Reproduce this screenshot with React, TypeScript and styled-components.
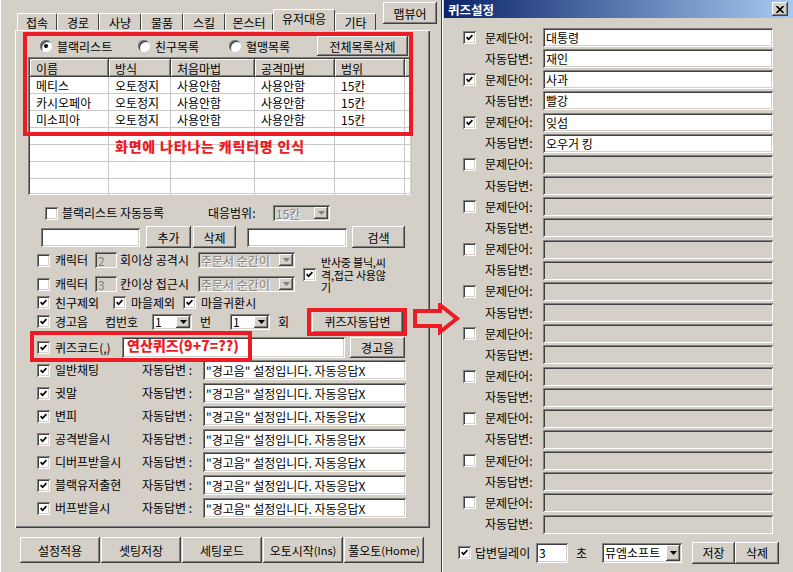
import React from "react";
import styled, { createGlobalStyle, css } from "styled-components";

const FACE = "#d4d0c8";
const RED = "#ed1c24";

const GlobalStyle = createGlobalStyle`
  html, body { margin: 0; padding: 0; background: ${FACE}; }
  body { font-family: "Noto Sans CJK KR", "Noto Sans", sans-serif; font-size: 12px; color: #000; }
  * { box-sizing: border-box; }
`;

const sunken = css`
  box-shadow: inset 1px 1px #808080, inset -1px -1px #ffffff, inset 2px 2px #404040, inset -2px -2px ${FACE};
`;
const raised = css`
  box-shadow: inset -1px -1px #404040, inset 1px 1px #ffffff, inset -2px -2px #808080, inset 2px 2px ${FACE};
`;

const Screen = styled.div`
  position: relative;
  display: flex;
  width: 793px;
  height: 572px;
  overflow: hidden;
  background: ${FACE};
`;

/* ---------- left window ---------- */
const LeftWindow = styled.div`
  width: 442px;
  height: 572px;
  flex: none;
  display: flex;
  flex-direction: column;
  padding-top: 2px;
  border-right: 1px solid #404040;
  box-shadow: inset 1px 0 #ffffff;
`;

const TopStrip = styled.div`
  display: flex;
  align-items: flex-end;
  height: 28px;
  padding-left: 17px;
`;

const Tab = styled.div<{ $w: number; $active?: boolean }>`
  width: ${(p) => p.$w}px;
  height: ${(p) => (p.$active ? 22 : 17)}px;
  margin-bottom: ${(p) => (p.$active ? -1 : 0)}px;
  position: relative;
  z-index: ${(p) => (p.$active ? 2 : 1)};
  display: flex;
  align-items: ${(p) => (p.$active ? "flex-start" : "center")};
  padding-top: ${(p) => (p.$active ? 2 : 1)}px;
  justify-content: center;
  background: ${FACE};
  border-top: 1px solid #ffffff;
  border-left: 1px solid #ffffff;
  border-right: 1px solid #404040;
  border-radius: 2px 2px 0 0;
  font-size: 12px;
  line-height: 14px;
  white-space: nowrap;
`;

const Btn = styled.button<{ $w: number; $h?: number; $ml?: number; $fs?: number }>`
  width: ${(p) => p.$w}px;
  height: ${(p) => p.$h ?? 22}px;
  margin-left: ${(p) => p.$ml ?? 0}px;
  flex: none;
  border: none;
  padding: 0;
  background: ${FACE};
  ${raised};
  font-family: inherit;
  font-size: ${(p) => p.$fs ?? 12}px;
  color: #000;
  white-space: nowrap;
  display: inline-flex;
  align-items: center;
  justify-content: center;
`;

const MapButton = styled(Btn)`
  align-self: flex-start;
`;

const TabPanel = styled.div`
  margin-left: 15px;
  width: 415px;
  height: 498px;
  flex: none;
  display: flex;
  flex-direction: column;
  box-shadow: inset 1px 1px #ffffff, inset -1px -1px #404040, inset -2px -2px #808080;
`;

const Row = styled.div<{ $mt?: number; $h: number; $pl?: number; $pr?: number }>`
  display: flex;
  align-items: center;
  flex: none;
  height: ${(p) => p.$h}px;
  margin-top: ${(p) => p.$mt ?? 0}px;
  padding-left: ${(p) => p.$pl ?? 0}px;
  padding-right: ${(p) => p.$pr ?? 0}px;
`;

const Label = styled.span<{ $w?: number; $ml?: number; $fs?: number }>`
  flex: none;
  ${(p) => (p.$w !== undefined ? `width: ${p.$w}px;` : "")}
  margin-left: ${(p) => p.$ml ?? 0}px;
  font-size: ${(p) => p.$fs ?? 12}px;
  white-space: nowrap;
  line-height: 16px;
`;

const RadioItem = styled.div<{ $w?: number }>`
  display: flex;
  align-items: center;
  flex: none;
  ${(p) => (p.$w !== undefined ? `width: ${p.$w}px;` : "")}
`;

const RadioCircle = styled.span<{ $on?: boolean }>`
  width: 12px;
  height: 12px;
  flex: none;
  border-radius: 50%;
  background: #ffffff;
  box-shadow: inset 1px 1px #808080, inset -1px -1px #ffffff, inset 2px 2px #404040;
  display: flex;
  align-items: center;
  justify-content: center;
  margin-right: 5px;
  &::after {
    content: "";
    width: 4px;
    height: 4px;
    border-radius: 50%;
    background: ${(p) => (p.$on ? "#000" : "transparent")};
  }
`;

const CheckBoxBox = styled.span<{ $ml?: number; $mt?: number }>`
  display: inline-flex;
  flex: none;
  width: 13px;
  height: 13px;
  background: #ffffff;
  ${sunken};
  align-items: center;
  justify-content: center;
  margin-left: ${(p) => p.$ml ?? 0}px;
  margin-top: ${(p) => p.$mt ?? 0}px;
`;

const Check: React.FC<{ on?: boolean; ml?: number; mt?: number }> = ({ on, ml, mt }) => (
  <CheckBoxBox $ml={ml} $mt={mt}>
    {on && (
      <svg width="7" height="7" viewBox="0 0 7 7">
        <path d="M0.6 3.2 L2.6 5.3 L6.4 1.2" stroke="#000" strokeWidth="1.7" fill="none" />
      </svg>
    )}
  </CheckBoxBox>
);

const TextBox = styled.div<{ $w: number; $h?: number; $ml?: number; $off?: boolean }>`
  width: ${(p) => p.$w}px;
  height: ${(p) => p.$h ?? 20}px;
  margin-left: ${(p) => p.$ml ?? 0}px;
  flex: none;
  background: ${(p) => (p.$off ? FACE : "#ffffff")};
  color: ${(p) => (p.$off ? "#808080" : "#000")};
  ${sunken};
  display: flex;
  align-items: center;
  padding-left: 3px;
  font-size: 12px;
  white-space: nowrap;
`;

const ComboBox = styled.div<{ $w: number; $h?: number; $ml?: number; $off?: boolean }>`
  width: ${(p) => p.$w}px;
  height: ${(p) => p.$h ?? 16}px;
  margin-left: ${(p) => p.$ml ?? 0}px;
  flex: none;
  background: ${(p) => (p.$off ? FACE : "#ffffff")};
  color: ${(p) => (p.$off ? "#808080" : "#000")};
  text-shadow: ${(p) => (p.$off ? "1px 1px #ffffff" : "none")};
  ${sunken};
  display: flex;
  align-items: center;
  padding: 2px 2px 2px 3px;
  font-size: 12px;
  white-space: nowrap;
`;

const ComboText = styled.span`
  flex: 1;
`;

const ComboArrow = styled.span`
  width: 14px;
  align-self: stretch;
  flex: none;
  background: ${FACE};
  ${raised};
  display: flex;
  align-items: center;
  justify-content: center;
`;

const Combo: React.FC<{ w: number; h?: number; ml?: number; off?: boolean; text: string }> = ({
  w,
  h,
  ml,
  off,
  text,
}) => (
  <ComboBox $w={w} $h={h} $ml={ml} $off={off}>
    <ComboText>{text}</ComboText>
    <ComboArrow>
      <svg width="7" height="4" viewBox="0 0 7 4">
        <path d="M0 0 H7 L3.5 4 Z" fill={off ? "#808080" : "#000"} />
      </svg>
    </ComboArrow>
  </ComboBox>
);

/* list view */
const ListView = styled.div`
  margin-top: 1px;
  margin-left: 13px;
  width: 384px;
  height: 138px;
  flex: none;
  background: #ffffff;
  ${sunken};
  padding: 2px;
  overflow: hidden;
`;

const ListHeader = styled.div`
  display: flex;
  height: 18px;
`;

const HeadCell = styled.div<{ $w: number }>`
  width: ${(p) => p.$w}px;
  flex: none;
  height: 18px;
  background: ${FACE};
  ${raised};
  padding-left: 6px;
  display: flex;
  align-items: center;
  white-space: nowrap;
`;

const ListRow = styled.div`
  display: flex;
  height: 17px;
`;

const Cell = styled.div<{ $w: number }>`
  width: ${(p) => p.$w}px;
  flex: none;
  height: 17px;
  border-right: 1px solid #c8c8c8;
  border-bottom: 1px solid #c8c8c8;
  padding-left: 6px;
  display: flex;
  align-items: center;
  white-space: nowrap;
`;

const COLS = [79, 62, 84, 80, 70, 5];

const CharBlock = styled.div`
  display: flex;
  margin-top: 4px;
  height: 40px;
  flex: none;
`;

const CharColumn = styled.div`
  display: flex;
  flex-direction: column;
  gap: 8px;
`;

const SideOption = styled.div`
  display: flex;
  align-items: flex-start;
  margin-left: 8px;
  padding-top: 4px;
`;

const SideText = styled.span`
  margin-left: 5px;
  font-size: 11px;
  line-height: 12.5px;
  letter-spacing: -0.2px;
  white-space: nowrap;
`;

const AutoList = styled.div`
  display: flex;
  flex-direction: column;
  gap: 3px;
  margin-top: 2px;
`;

const BottomBar = styled.div`
  display: flex;
  gap: 1px;
  margin-top: 9px;
  padding-left: 20px;
`;

const Small = styled.span`
  font-size: 11px;
`;

/* ---------- right window ---------- */
const RightWindow = styled.div`
  flex: 1;
  height: 572px;
  display: flex;
  flex-direction: column;
  padding-left: 2px;
  box-shadow: inset 1px 0 #ffffff;
`;

const TitleBar = styled.div`
  height: 18px;
  flex: none;
  background: linear-gradient(to right, #0a246a, #a6caf0);
  display: flex;
  align-items: center;
  padding-left: 4px;
  padding-right: 5px;
  color: #ffffff;
  font-weight: bold;
  font-size: 12.5px;
`;

const CloseBtn = styled.span`
  margin-left: auto;
  width: 16px;
  height: 14px;
  background: ${FACE};
  ${raised};
  display: flex;
  align-items: center;
  justify-content: center;
`;

const QuizList = styled.div`
  display: flex;
  flex-direction: column;
  gap: 2.17px;
  margin-top: 10px;
`;

/* ---------- annotations (overlay) ---------- */
const RedBox = styled.div<{ $l: number; $t: number; $w: number; $h: number }>`
  position: absolute;
  left: ${(p) => p.$l}px;
  top: ${(p) => p.$t}px;
  width: ${(p) => p.$w}px;
  height: ${(p) => p.$h}px;
  border: 4px solid ${RED};
  pointer-events: none;
`;

const RedNote = styled.div<{ $l: number; $t: number; $fs: number; $ls?: number }>`
  position: absolute;
  left: ${(p) => p.$l}px;
  top: ${(p) => p.$t}px;
  color: ${RED};
  font-weight: 900;
  font-size: ${(p) => p.$fs}px;
  letter-spacing: ${(p) => p.$ls ?? 0}px;
  line-height: 1.1;
  white-space: nowrap;
`;

const ArrowMark = styled.svg`
  position: absolute;
  left: 413px;
  top: 303px;
`;

const TABS: [string, number][] = [
  ["접속", 40],
  ["경로", 42],
  ["사냥", 42],
  ["물품", 42],
  ["스킬", 42],
  ["몬스터", 48],
  ["유저대응", 62],
  ["기타", 41],
];

const LIST = [
  ["메티스", "오토정지", "사용안함", "사용안함", "15칸", ""],
  ["카시오페아", "오토정지", "사용안함", "사용안함", "15칸", ""],
  ["미소피아", "오토정지", "사용안함", "사용안함", "15칸", ""],
  ["", "", "", "", "", ""],
  ["", "", "", "", "", ""],
  ["", "", "", "", "", ""],
  ["", "", "", "", "", ""],
];

const AUTO = ["일반채팅", "귓말", "변피", "공격받을시", "디버프받을시", "블랙유저출현", "버프받을시"];

const QUIZ: [string, string, boolean][] = [
  ["대통령", "재인", true],
  ["사과", "빨강", true],
  ["잊섬", "오우거 킹", true],
  ...Array.from({ length: 9 }, () => ["", "", false] as [string, string, boolean]),
];

export default function App() {
  return (
    <Screen>
      <GlobalStyle />
      <LeftWindow>
        <TopStrip>
          {TABS.map(([t, w]) => (
            <Tab key={t} $w={w} $active={t === "유저대응"}>
              {t}
            </Tab>
          ))}
          <MapButton $w={54} $h={22} $ml={7}>
            맵뷰어
          </MapButton>
        </TopStrip>

        <TabPanel>
          <Row $mt={6} $h={20} $pl={25} $pr={22}>
            <RadioItem $w={98}>
              <RadioCircle $on />
              블랙리스트
            </RadioItem>
            <RadioItem $w={91}>
              <RadioCircle />
              친구목록
            </RadioItem>
            <RadioItem>
              <RadioCircle />
              혈맹목록
            </RadioItem>
            <Btn $w={91} $h={20} style={{ marginLeft: "auto" }}>
              전체목록삭제
            </Btn>
          </Row>

          <ListView>
            <ListHeader>
              {["이름", "방식", "처음마법", "공격마법", "범위", ""].map((h, i) => (
                <HeadCell key={i} $w={COLS[i]}>
                  {h}
                </HeadCell>
              ))}
            </ListHeader>
            {LIST.map((r, ri) => (
              <ListRow key={ri}>
                {r.map((c, ci) => (
                  <Cell key={ci} $w={COLS[ci]}>
                    {c}
                  </Cell>
                ))}
              </ListRow>
            ))}
          </ListView>

          <Row $mt={10} $h={16} $pl={30}>
            <Check />
            <Label $w={146} $ml={4}>
              블랙리스트 자동등록
            </Label>
            <Label $w={65}>대응범위:</Label>
            <Combo w={57} off text="15칸" />
          </Row>

          <Row $mt={5} $h={22} $pl={26}>
            <TextBox $w={99} $h={19} />
            <Btn $w={45} $ml={6}>
              추가
            </Btn>
            <Btn $w={43} $ml={2}>
              삭제
            </Btn>
            <TextBox $w={100} $h={19} $ml={11} />
            <Btn $w={53} $ml={5}>
              검색
            </Btn>
          </Row>

          <CharBlock>
            <CharColumn>
              <Row $h={16} $pl={22}>
                <Check />
                <Label $w={40} $ml={5}>
                  캐릭터
                </Label>
                <TextBox $w={22} $h={16} $off>
                  2
                </TextBox>
                <Label $w={78} $ml={3}>
                  회이상 공격시
                </Label>
                <Combo w={97} off text="주문서 순간이" />
              </Row>
              <Row $h={16} $pl={22}>
                <Check />
                <Label $w={40} $ml={5}>
                  캐릭터
                </Label>
                <TextBox $w={22} $h={16} $off>
                  3
                </TextBox>
                <Label $w={78} $ml={3}>
                  칸이상 접근시
                </Label>
                <Combo w={97} off text="주문서 순간이" />
              </Row>
            </CharColumn>
            <SideOption>
              <Check on mt={12} />
              <SideText>
                반사중 블닉,씨
                <br />
                격,접근 사용않
                <br />기
              </SideText>
            </SideOption>
          </CharBlock>

          <Row $mt={3} $h={15} $pl={22}>
            <Check on />
            <Label $w={58} $ml={5}>
              친구제외
            </Label>
            <Check on />
            <Label $w={52} $ml={5}>
              마을제외
            </Label>
            <Check on />
            <Label $ml={5}>마을귀환시</Label>
          </Row>

          <Row $h={23} $pl={22}>
            <Check on />
            <Label $w={50} $ml={5}>
              경고음
            </Label>
            <Label $w={47}>컴번호</Label>
            <Combo w={40} text="1" />
            <Label $w={30} $ml={8}>
              번
            </Label>
            <Combo w={40} text="1" />
            <Label $w={34} $ml={8}>
              회
            </Label>
            <Btn $w={91} $h={22}>
              퀴즈자동답변
            </Btn>
          </Row>

          <Row $mt={4} $h={21} $pl={22}>
            <Check on />
            <Label $w={67} $ml={5}>
              퀴즈코드(,)
            </Label>
            <TextBox $w={223} $h={21} />
            <Btn $w={55} $h={21} $ml={5}>
              경고음
            </Btn>
          </Row>

          <AutoList>
            {AUTO.map((a) => (
              <Row key={a} $h={20} $pl={22}>
                <Check on />
                <Label $w={87} $ml={5}>
                  {a}
                </Label>
                <Label $w={61}>자동답변 :</Label>
                <TextBox $w={203} $h={20}>
                  "경고음" 설정입니다. 자동응답X
                </TextBox>
              </Row>
            ))}
          </AutoList>
        </TabPanel>

        <BottomBar>
          <Btn $w={80} $h={26}>
            설정적용
          </Btn>
          <Btn $w={80} $h={26}>
            셋팅저장
          </Btn>
          <Btn $w={80} $h={26}>
            세팅로드
          </Btn>
          <Btn $w={80} $h={26}>
            오토시작<Small>(Ins)</Small>
          </Btn>
          <Btn $w={80} $h={26}>
            풀오토<Small>(Home)</Small>
          </Btn>
        </BottomBar>
      </LeftWindow>

      <RightWindow>
        <TitleBar>
          퀴즈설정
          <CloseBtn>
            <svg width="8" height="7" viewBox="0 0 8 7">
              <path d="M0.5 0 L7.5 7 M7.5 0 L0.5 7" stroke="#000" strokeWidth="1.6" />
            </svg>
          </CloseBtn>
        </TitleBar>
        <QuizList>
          {QUIZ.map(([q, a, on], i) => (
            <React.Fragment key={i}>
              <Row $h={19} $pl={19}>
                <Check on={on} />
                <Label $w={58} $ml={9}>
                  문제단어:
                </Label>
                <TextBox $w={230} $h={19} $off={!on}>
                  {q}
                </TextBox>
              </Row>
              <Row $h={19} $pl={41}>
                <Label $w={58}>자동답변:</Label>
                <TextBox $w={230} $h={19} $off={!on}>
                  {a}
                </TextBox>
              </Row>
            </React.Fragment>
          ))}
        </QuizList>
        <Row $mt={8} $h={22} $pl={14}>
          <Check on />
          <Label $w={58} $ml={4}>
            답변딜레이
          </Label>
          <TextBox $w={32} $h={20} $ml={3}>
            3
          </TextBox>
          <Label $w={26} $ml={8}>
            초
          </Label>
          <Combo w={80} h={20} text="뮤엠소프트" />
          <Btn $w={43} $h={22} $ml={10}>
            저장
          </Btn>
          <Btn $w={44} $h={22}>
            삭제
          </Btn>
        </Row>
      </RightWindow>

      {/* annotations over the screenshot */}
      <RedBox $l={23} $t={32} $w={390} $h={104} />
      <RedNote $l={115} $t={139} $fs={14} $ls={0.8}>
        화면에 나타나는 캐릭터명 인식
      </RedNote>
      <RedBox $l={307} $t={308} $w={100} $h={28} />
      <RedBox $l={30} $t={331} $w={222} $h={31} />
      <RedNote $l={127} $t={338} $fs={14}>
        연산퀴즈(9+7=??)
      </RedNote>
      <ArrowMark width="48" height="32" viewBox="0 0 48 32">
        <polygon
          points="2,8 27,8 27,2 44,15.5 27,29 27,23 2,23"
          fill={FACE}
          stroke={RED}
          strokeWidth="4"
          strokeLinejoin="miter"
        />
      </ArrowMark>
    </Screen>
  );
}
